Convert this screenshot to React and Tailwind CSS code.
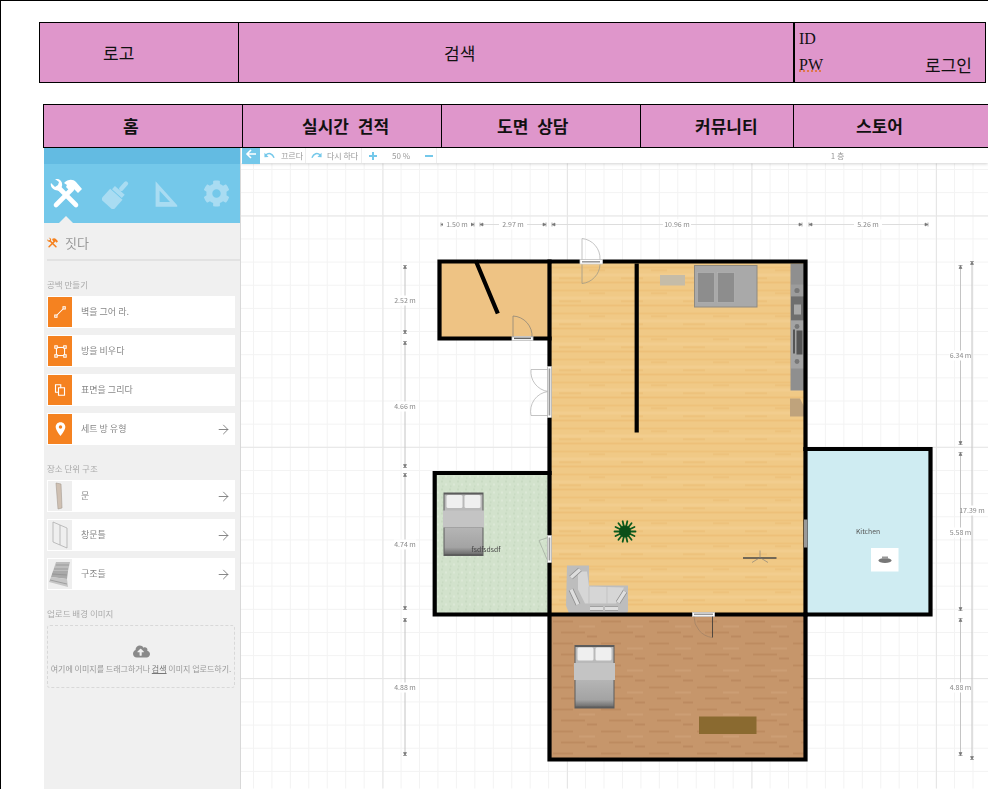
import React from 'react';
import { ArrowRight } from 'lucide-react';
import { FaCog, FaCloudUploadAlt } from 'react-icons/fa';

const kr = "font-['Noto_Sans_CJK_KR','Liberation_Sans',sans-serif]";

const ToolsIcon = ({ className }) => (
  <svg viewBox="0 0 32 30" className={className} fill="currentColor">
    <path d="M9 9 L26 26" stroke="currentColor" strokeWidth="4.6" strokeLinecap="round" />
    <path d="M1 4 L5 8 L8 6 L9 3 L5 0 C9 -1 13 2 12 7 L10 12 L5 11 C2 10 0 7 1 4 Z" />
    <path d="M22 10 L6 26" stroke="currentColor" strokeWidth="4.6" strokeLinecap="round" />
    <path d="M14 4 C18 0 23 0 26 3 L32 10 L28 14 L24 10 L21 13 L16 8 L17 6 Z" />
  </svg>
);

const BrushIcon = ({ className }) => (
  <svg viewBox="0 0 32 32" className={className} fill="currentColor">
    <g transform="rotate(42 16 16)">
      <rect x="14" y="-3" width="5" height="13" rx="2.5" />
      <rect x="9" y="10" width="15" height="5" />
      <rect x="7" y="16" width="19" height="16" />
    </g>
  </svg>
);

const RulerIcon = ({ className }) => (
  <svg viewBox="0 0 30 32" className={className} fill="currentColor">
    <path fillRule="evenodd" d="M2 0 L2 32 L29 32 L29 30 Z M7 12 L7 26 L20 26 Z" />
  </svg>
);

const WallIcon = () => (
  <svg viewBox="0 0 16 16" className="w-[12px] h-[12px]" fill="none" stroke="white" strokeWidth="1.4">
    <rect x="1" y="12" width="3" height="3" />
    <rect x="12" y="1" width="3" height="3" />
    <path d="M4 12 L12 4" />
  </svg>
);

const RoomIcon = () => (
  <svg viewBox="0 0 16 16" className="w-[13px] h-[13px]" fill="none" stroke="white" strokeWidth="1.3">
    <rect x="3" y="3" width="10" height="10" />
    <rect x="1" y="1" width="3" height="3" fill="#f58220" />
    <rect x="12" y="1" width="3" height="3" fill="#f58220" />
    <rect x="1" y="12" width="3" height="3" fill="#f58220" />
    <rect x="12" y="12" width="3" height="3" fill="#f58220" />
  </svg>
);

const SurfaceIcon = () => (
  <svg viewBox="0 0 16 16" className="w-[12px] h-[12px]" fill="none" stroke="white" strokeWidth="1.5">
    <path d="M2 1 L9 1 L9 5 L14 5 L14 15 L6 15 L6 11 L2 11 Z" />
    <path d="M9 5 L6 5 L6 11" />
  </svg>
);

const PinIcon = () => (
  <svg viewBox="0 0 16 20" className="w-[11px] h-[14px]">
    <path fill="white" fillRule="evenodd" d="M8 0 C3.5 0 1 3.2 1 7 C1 11.5 8 20 8 20 C8 20 15 11.5 15 7 C15 3.2 12.5 0 8 0 Z M8 4.5 A2.5 2.5 0 1 1 8 9.5 A2.5 2.5 0 1 1 8 4.5 Z" />
  </svg>
);

const DoorThumb = () => (
  <svg viewBox="0 0 24 30" className="w-[24px] h-[30px]">
    <path d="M8 2 L13 3 L14 27 L10 28 Z" fill="#cfc0b2" stroke="#a59a90" strokeWidth="0.6" />
  </svg>
);

const WindowThumb = () => (
  <svg viewBox="0 0 24 30" className="w-[24px] h-[30px]" fill="none" stroke="#a8a8a8" strokeWidth="0.7">
    <path d="M5 2 L19 8 L19 28 L5 22 Z" />
    <path d="M12 5 L12 25" />
  </svg>
);

const StairsThumb = () => (
  <svg viewBox="0 0 24 30" className="w-[24px] h-[30px]">
    <path d="M8 3 L22 3 L20 12 L5 12 Z" fill="#bdbdbd" />
    <path d="M5 12 L20 12 L19 20 L3 18 Z" fill="#a9a9a9" />
    <path d="M3 18 L19 20 L20 28 L1 23 Z" fill="#c6c6c6" />
    <path d="M8 6 L21 6 M6 10 L20 10 M4 15 L19 16 M2 21 L19 25" stroke="#8e8e8e" strokeWidth="0.7" />
  </svg>
);

const Label = ({ children }) => (
  <div className="h-[35px] pt-[12px] pl-[3px] flex items-center text-[8.5px] text-[#aaa]">{children}</div>
);

const ToolRow = ({ icon, thumb, text, arrow }) => (
  <div className="h-[32px] w-[188px] ml-[3px] bg-white flex items-center">
    {icon && <div className="w-[24px] h-[30px] ml-[1px] bg-[#f58220] flex items-center justify-center">{icon}</div>}
    {thumb && <div className="w-[24px] h-[30px] ml-[1px] bg-[#efefef] flex items-center justify-center">{thumb}</div>}
    <span className="ml-[9px] flex-1 text-[9px] text-[#888]">{text}</span>
    {arrow && <ArrowRight size={15} strokeWidth={1.4} className="mr-[4px] text-[#777]" />}
  </div>
);

const Sidebar = () => (
  <div className={`w-[197px] shrink-0 bg-[#f0f0f0] border-r border-[#d8d8d8] blur-[0.3px] ${kr}`}>
    <div className="h-[16px] bg-[#63bbe2]" />
    <div className="relative h-[59px] bg-[#74c8ea] overflow-hidden">
      <div className="h-full flex items-center -ml-[3px]">
        <div className="w-[50px] shrink-0 flex justify-center"><ToolsIcon className="w-[32px] h-[30px] text-white" /></div>
        <div className="w-[50px] shrink-0 flex justify-center"><BrushIcon className="w-[28px] h-[30px] text-[#a9dcf2]" /></div>
        <div className="w-[50px] shrink-0 flex justify-center"><RulerIcon className="w-[24px] h-[32px] text-[#a9dcf2]" /></div>
        <div className="w-[50px] shrink-0 flex justify-center"><FaCog size={27} className="text-[#a9dcf2]" /></div>
      </div>
      <div className="absolute left-[15px] bottom-0 w-0 h-0 border-x-[7px] border-x-transparent border-b-[7px] border-b-[#f0f0f0]" />
    </div>
    <div className="h-[38px] pt-[3px] ml-[3px] border-b-2 border-[#e2e2e2] flex items-center">
      <ToolsIcon className="w-[11px] h-[12px] text-[#f58220]" />
      <span className="ml-[7px] text-[13px] text-[#999]">짓다</span>
    </div>
    <Label>공백 만들기</Label>
    <div className="flex flex-col gap-[7px]">
      <ToolRow icon={<WallIcon />} text="벽을 그어 라." />
      <ToolRow icon={<RoomIcon />} text="방을 비우다" />
      <ToolRow icon={<SurfaceIcon />} text="표면을 그리다" />
      <ToolRow icon={<PinIcon />} text="세트 방 유형" arrow />
    </div>
    <Label>장소 단위 구조</Label>
    <div className="flex flex-col gap-[7px]">
      <ToolRow thumb={<DoorThumb />} text="문" arrow />
      <ToolRow thumb={<WindowThumb />} text="창문틀" arrow />
      <ToolRow thumb={<StairsThumb />} text="구조들" arrow />
    </div>
    <Label>업로드 배경 이미지</Label>
    <div className="h-[63px] w-[188px] ml-[3px] border border-dashed border-[#d8d8d8] rounded-[3px] flex flex-col items-center pt-[17px]">
      <FaCloudUploadAlt size={17} className="text-[#8a8a8a]" />
      <p className="mt-[3px] text-[8px] leading-[12px] text-[#999] whitespace-nowrap">
        여기에 이미지를 드래그하거나 <span className="underline text-[#777]">검색</span> 이미지 업로드하기.
      </p>
    </div>
  </div>
);

const Toolbar = () => (
  <div className={`relative z-10 h-[15px] shrink-0 bg-white flex text-[8px] leading-[15px] text-[#999] shadow-[0_1px_3px_rgba(0,0,0,0.18)] blur-[0.3px] ${kr}`}>
    <div className="w-[18px] h-[16px] ml-[1px] bg-[#74c8ea] flex justify-center">
      <svg viewBox="0 0 12 10" className="w-[12px] h-[10px] mt-[1px]" fill="none" stroke="white" strokeWidth="1.6">
        <path d="M11 5 L2 5 M6 1 L2 5 L6 9" />
      </svg>
    </div>
    <div className="w-[46px] border-r border-[#eee] flex items-center pl-[4px] gap-[6px]">
      <svg viewBox="0 0 12 8" className="w-[11px] h-[8px]" fill="none" stroke="#74c8ea" strokeWidth="1.6">
        <path d="M2 3 C5 0 9 1 11 6" />
        <path d="M0.5 0.5 L0.5 5.5 L5 5 Z" fill="#74c8ea" stroke="none" />
      </svg>
      <span>끄르다</span>
    </div>
    <div className="w-[56px] border-r border-[#eee] flex items-center pl-[5px] gap-[5px]">
      <svg viewBox="0 0 12 8" className="w-[11px] h-[8px]" fill="none" stroke="#74c8ea" strokeWidth="1.6">
        <path d="M10 3 C7 0 3 1 1 6" />
        <path d="M11.5 0.5 L11.5 5.5 L7 5 Z" fill="#74c8ea" stroke="none" />
      </svg>
      <span>다시 하다</span>
    </div>
    <div className="w-[75px] border-r border-[#eee] flex items-center pl-[7px]">
      <svg viewBox="0 0 8 8" className="w-[8px] h-[8px] shrink-0" stroke="#74c8ea" strokeWidth="2">
        <path d="M4 0 L4 8 M0 4 L8 4" />
      </svg>
      <span className="ml-[15px]">50 %</span>
      <span className="ml-[15px] w-[8px] h-[2px] bg-[#74c8ea]" />
    </div>
    <div className="flex-1 text-center pl-[250px]">1 층</div>
  </div>
);

const minorX = Array.from({ length: 41 }, (_, i) => 235 + i * 18.45);
const minorY = Array.from({ length: 28 }, (_, i) => 170 + i * 23.15);
const majorX = [383, 567.5, 752, 936.5];
const majorY = [216.5, 447.8, 679];

const hDims = [
  { a: 441, b: 474, label: '1.50 m', x: 457 },
  { a: 480, b: 546, label: '2.97 m', x: 513 },
  { a: 552, b: 802, label: '10.96 m', x: 677 },
  { a: 809, b: 928, label: '5.26 m', x: 868 },
];

const vDims = [
  { x: 405, a: 266, b: 334, label: '2.52 m', y: 301 },
  { x: 405, a: 342, b: 468, label: '4.66 m', y: 407 },
  { x: 405, a: 474, b: 610, label: '4.74 m', y: 545 },
  { x: 405, a: 619, b: 756, label: '4.88 m', y: 688 },
  { x: 960.5, a: 266, b: 445, label: '6.34 m', y: 356 },
  { x: 960.5, a: 453, b: 611, label: '5.58 m', y: 533 },
  { x: 960.5, a: 619, b: 756, label: '4.88 m', y: 688 },
  { x: 972, a: 262, b: 760, label: '17.39 m', y: 511 },
];

const dimText = { fontSize: 7, fill: '#8a8a8a', textAnchor: 'middle', dominantBaseline: 'middle' };

const Bed = ({ x, y }) => (
  <g transform={`translate(${x} ${y})`}>
    <rect width="40" height="63.5" fill="#5c5c5c" />
    <rect x="1" y="2" width="38" height="17" fill="#b9b9b9" />
    <rect x="3" y="2.5" width="16" height="13" rx="1.5" fill="#efefef" />
    <rect x="21" y="2.5" width="16" height="13" rx="1.5" fill="#efefef" />
    <rect x="-0.5" y="18" width="41" height="17" fill="#c4c4c4" />
    <rect x="1" y="35" width="38" height="26.5" fill="url(#bedBody)" />
  </g>
);

const FloorPlan = () => (
  <svg viewBox="241 164 747 625" className={`flex-1 w-[747px] h-[625px] bg-white blur-[0.35px] ${kr}`}>
    <defs>
      <pattern id="wood" width="62" height="23" patternUnits="userSpaceOnUse" patternTransform="translate(551 264)">
        <rect width="62" height="23" fill="#f0c986" />
        <rect y="3" width="62" height="2" fill="#eec27b" />
        <rect y="10" width="62" height="3" fill="#f2cd8e" />
        <rect y="18" width="62" height="2" fill="#edc079" />
        <rect x="8" y="14" width="22" height="1.5" fill="#ecbf78" />
        <rect x="38" y="6" width="16" height="1.5" fill="#ecbf78" />
      </pattern>
      <pattern id="parquet" width="48" height="22" patternUnits="userSpaceOnUse" patternTransform="translate(551 618)">
        <rect width="48" height="22" fill="#c6966b" />
        <rect x="2" y="3" width="20" height="2" fill="#bd8b60" />
        <rect x="28" y="8" width="16" height="2" fill="#cc9e74" />
        <rect x="10" y="14" width="24" height="2" fill="#bd8b60" />
        <rect x="36" y="18" width="10" height="2" fill="#bc8a60" />
      </pattern>
      <pattern id="carpet" width="8" height="8" patternUnits="userSpaceOnUse">
        <rect width="8" height="8" fill="#d2e2cc" />
        <rect x="1" y="1" width="2" height="2" fill="#c8dac2" />
        <rect x="5" y="4" width="2" height="2" fill="#dbe8d6" />
        <rect x="2" y="6" width="1.5" height="1.5" fill="#c6d9c0" />
      </pattern>
      <linearGradient id="bedBody" x1="0" y1="0" x2="0" y2="1">
        <stop offset="0" stopColor="#b5b5b5" />
        <stop offset="0.75" stopColor="#a3a3a3" />
        <stop offset="1" stopColor="#6f6f6f" />
      </linearGradient>
    </defs>

    {/* grid */}
    {minorX.map((x) => <line key={x} x1={x} x2={x} y1="164" y2="789" stroke="#f3f3f3" strokeWidth="1" />)}
    {minorY.map((y) => <line key={y} x1="241" x2="988" y1={y} y2={y} stroke="#f3f3f3" strokeWidth="1" />)}
    {majorX.map((x) => <line key={x} x1={x} x2={x} y1="164" y2="789" stroke="#e6e6e6" strokeWidth="1" />)}
    {majorY.map((y) => <line key={y} x1="241" x2="988" y1={y} y2={y} stroke="#e6e6e6" strokeWidth="1" />)}

    {/* floors */}
    <rect x="439" y="262" width="110" height="77" fill="#eec384" />
    <rect x="550" y="262" width="255" height="352" fill="url(#wood)" />
    <rect x="435" y="474" width="114" height="141" fill="url(#carpet)" />
    <rect x="806" y="449" width="125" height="166" fill="#cfecf2" />
    <rect x="550" y="616" width="255" height="145" fill="url(#parquet)" />

    {/* kitchen counter */}
    <rect x="790.5" y="264" width="14" height="127" fill="#8f8f8f" />
    <rect x="791" y="285" width="13" height="12" fill="#9c9c9c" />
    <circle cx="797" cy="291" r="2.6" fill="#777" />
    <rect x="791" y="297" width="13" height="24" fill="#6e6e6e" />
    <rect x="794" y="305" width="7" height="10" fill="#a8a8a8" />
    <rect x="791" y="321" width="13" height="48" fill="#a3a3a3" />
    <circle cx="797" cy="327" r="2.4" fill="#777" />
    <circle cx="797" cy="362" r="2.4" fill="#777" />
    <rect x="793" y="330" width="2" height="24" fill="#555" />
    <rect x="796.5" y="331" width="6" height="24" fill="#555" />
    <path d="M790 399 L800 399 L804 407 L804 417 L790 417 Z" fill="#bfa37c" />

    {/* furniture */}
    <rect x="660" y="275.5" width="25" height="10.5" fill="#c5bca8" />
    <rect x="694.5" y="266" width="62.5" height="41.5" fill="#a9a9a9" stroke="#8f8a80" strokeWidth="1" />
    <rect x="697.5" y="273" width="17" height="30" fill="#8d8d8d" stroke="#b3b3b3" strokeWidth="0.7" />
    <rect x="717.5" y="273" width="17" height="30" fill="#8d8d8d" stroke="#b3b3b3" strokeWidth="0.7" />
    <Bed x={443.5} y={493} />
    <Bed x={574.5} y={645.5} />
    <path d="M567 566 L589 566 L589 586 L628 586 L628 612 L626 614 L569 614 L566 606 Z" fill="#bdbdbd" />
    <path d="M578 572 L587 572 L589 587 L624 588 L616 604 L585 604 L578 590 Z" fill="#d6d6d6" />
    <path d="M589 587 L589 604 M607 587 L607 604" stroke="#bcbcbc" strokeWidth="0.7" />
    <path d="M571 578 L580 570 M571 590 L578 605 M590 609 L603 609 M605 609 L618 609 M618 603 L625 592" stroke="#8c8c8c" strokeWidth="5" />
    <path d="M571 578 L580 570 M571 590 L578 605 M590 609 L603 609 M605 609 L618 609 M618 603 L625 592" stroke="#dedede" strokeWidth="3.4" />
    <rect x="699" y="717" width="57.5" height="17.5" fill="#8a6a30" />
    <g stroke="#0b5a1c" strokeWidth="1.8" strokeLinecap="round">
      {Array.from({ length: 14 }, (_, i) => {
        const t = (i / 14) * Math.PI * 2;
        return <line key={i} x1="625" y1="532" x2={625 + Math.cos(t) * 10.5} y2={532 + Math.sin(t) * 10.5} />;
      })}
    </g>
    <circle cx="625" cy="532" r="6" fill="#0b4f18" />
    <path d="M743 558.5 L776.5 558.5" stroke="#4a4a4a" strokeWidth="1.4" />
    <path d="M760 558 L752 563 M760 558 L768 563 M760 558 L760 551" stroke="#777" strokeWidth="0.6" />
    <rect x="871" y="548.5" width="27.5" height="23.5" fill="#fff" />
    <ellipse cx="885" cy="561" rx="6.5" ry="2.4" fill="#777" />
    <rect x="882" y="557" width="6" height="2.5" fill="#999" />

    {/* walls */}
    <g fill="none" stroke="#000" strokeWidth="4.2" strokeLinecap="square">
      <path d="M549.5 262 L439.5 262 L439.5 339 L549.5 339" />
      <path d="M549.5 262 L805.5 262 L805.5 760 L549.5 760 L549.5 262" />
      <path d="M549.5 473.5 L434.7 473.5 L434.7 615 L805.5 615" />
      <path d="M805.5 449.5 L930.5 449.5 L930.5 615 L805.5 615" />
      <path d="M636.7 266 L636.7 431" />
      <path d="M476.5 263 L497 312" />
    </g>

    {/* door and window openings */}
    <rect x="580" y="260" width="22.5" height="4.5" fill="#fff" stroke="#ccc" strokeWidth="0.8" />
    <rect x="582" y="261.5" width="18" height="1.6" fill="#999" />
    <rect x="512" y="337" width="21" height="4" fill="#fff" stroke="#ccc" strokeWidth="0.8" />
    <rect x="514" y="338" width="17" height="1.6" fill="#666" />
    <rect x="547.5" y="367" width="4" height="51" fill="#fff" stroke="#ccc" strokeWidth="0.6" />
    <rect x="548.6" y="369" width="1.7" height="47" fill="#999" />
    <rect x="547.5" y="536" width="4" height="27" fill="#fff" stroke="#ccc" strokeWidth="0.6" />
    <rect x="548.6" y="538" width="1.7" height="23" fill="#999" />
    <rect x="692.5" y="613" width="22" height="4" fill="#fff" stroke="#ccc" strokeWidth="0.8" />
    <rect x="694" y="614" width="19" height="1.6" fill="#999" />
    <rect x="804" y="520" width="3.4" height="28" fill="#999" />

    {/* door swings */}
    <g fill="none" strokeWidth="0.8">
      <path d="M582 260 L582 239 A20 20 0 0 1 600 260" stroke="#b5b5b5" />
      <path d="M582 265 L582 284 A20 20 0 0 0 600 265" stroke="#a09a88" />
      <path d="M513 338 L513 316.5 A20 20 0 0 1 532 338" stroke="#8e8678" />
      <path d="M548 370 L531 370 A20 20 0 0 0 548 392 A20 20 0 0 0 531 416 L548 416" stroke="#b5b5b5" />
      <path d="M548 538 L539 541 L547 560" stroke="#a5aea1" />
      <path d="M694 617 A21 21 0 0 0 712 638" stroke="#a28366" />
      <path d="M712.5 617 L712.5 638" stroke="#333" />
    </g>

    {/* dimensions */}
    {hDims.map((d) => (
      <g key={d.label}>
        <line x1={d.a} x2={d.b} y1="225" y2="225" stroke="#ddd" strokeWidth="1" />
        <path d={`M${d.a} 223 L${d.a} 227 M${d.b} 223 L${d.b} 227 M${d.a} 225 L${d.a + 3} 223.5 L${d.a + 3} 226.5 Z M${d.b} 225 L${d.b - 3} 223.5 L${d.b - 3} 226.5 Z`} stroke="#777" strokeWidth="0.6" fill="#777" />
        <rect x={d.x - 14} y="220" width="28" height="10" fill="#fff" />
        <text x={d.x} y="225.5" {...dimText}>{d.label}</text>
      </g>
    ))}
    {vDims.map((d) => (
      <g key={`${d.x}-${d.a}`}>
        <line x1={d.x} x2={d.x} y1={d.a} y2={d.b} stroke="#c4c4c4" strokeWidth="1" />
        <path d={`M${d.x - 2} ${d.a} L${d.x + 2} ${d.a} M${d.x - 2} ${d.b} L${d.x + 2} ${d.b} M${d.x} ${d.a} L${d.x - 1.5} ${d.a + 3} L${d.x + 1.5} ${d.a + 3} Z M${d.x} ${d.b} L${d.x - 1.5} ${d.b - 3} L${d.x + 1.5} ${d.b - 3} Z`} stroke="#777" strokeWidth="0.6" fill="#777" />
        <rect x={d.x - 11} y={d.y - 5} width="22" height="10" fill="#fff" />
        <text x={d.x} y={d.y + 0.5} {...dimText}>{d.label}</text>
      </g>
    ))}

    <text x="486" y="550.5" fontSize="6.8" fill="#444" textAnchor="middle" dominantBaseline="middle">fsdfsdsdf</text>
    <text x="868" y="533" fontSize="6.8" fill="#555" textAnchor="middle" dominantBaseline="middle">Kitchen</text>
  </svg>
);

export default function App() {
  return (
    <div className={`w-[988px] h-[789px] overflow-hidden bg-white border-t border-l border-black pt-[21px] ${kr}`}>
      {/* top bar */}
      <div className="ml-[38px] w-[947px] h-[61px] flex border border-black bg-[#df96cb] text-[17px] text-[#111]">
        <div className="w-[199px] border-r border-black flex items-center pl-[63px]">로고</div>
        <div className="w-[556px] border-r-2 border-black flex items-center pl-[205px]">검색</div>
        <div className="flex-1 pl-[4px] pt-[3px] font-['Liberation_Serif',serif] text-[16px] leading-[26px]">
          <div>ID</div>
          <div className="flex justify-between pr-[13px]">
            <span className="underline decoration-dotted decoration-[#e0702a]">PW</span>
            <span className={`text-[17px] ${kr}`}>로그인</span>
          </div>
        </div>
      </div>

      {/* nav */}
      <div className="mt-[21px] ml-[42px] w-[946px] h-[44px] flex border border-black border-r-0 bg-[#df96cb] text-[17px] font-bold text-[#111] [word-spacing:5px]">
        <div className="w-[199px] border-r border-black flex items-center pl-[79px]">홈</div>
        <div className="w-[199px] border-r border-black flex items-center pl-[59px]">실시간 견적</div>
        <div className="w-[199px] border-r border-black flex items-center pl-[55px]">도면 상담</div>
        <div className="w-[153px] border-r border-black flex items-center pl-[54px]">커뮤니티</div>
        <div className="flex-1 flex items-center pl-[62px]">스토어</div>
      </div>

      {/* editor */}
      <div className="ml-[43px] flex h-[641px]">
        <Sidebar />
        <div className="flex-1 flex flex-col overflow-hidden">
          <Toolbar />
          <FloorPlan />
        </div>
      </div>
    </div>
  );
}
